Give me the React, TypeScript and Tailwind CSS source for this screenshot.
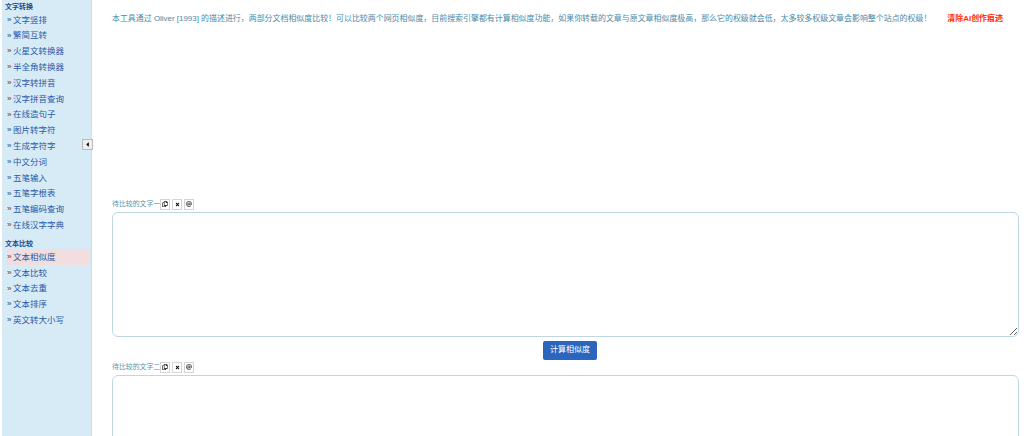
import { FaRegCopy, FaTimes, FaAt, FaCaretLeft } from 'react-icons/fa';

const group1 = [
  '文字竖排',
  '繁简互转',
  '火星文转换器',
  '半全角转换器',
  '汉字转拼音',
  '汉字拼音查询',
  '在线造句子',
  '图片转字符',
  '生成字符字',
  '中文分词',
  '五笔输入',
  '五笔字根表',
  '五笔编码查询',
  '在线汉字字典',
];

const group2 = ['文本相似度', '文本比较', '文本去重', '文本排序', '英文转大小写'];

const fontFamily = "font-['Liberation_Sans','Noto_Sans_CJK_SC',sans-serif]";

function NavItem({ label, active }: { label: string; active?: boolean }) {
  return (
    <li className={`ml-[5px] flex h-[15.8px] w-[83px] items-center text-[8.5px] leading-none text-[#2a5aa8] ${active ? 'bg-[#f2dede]' : ''}`}>
      <span className="w-[6px] text-[8px] text-[#444444]">»</span>
      <span>{label}</span>
    </li>
  );
}

function ToolButtons() {
  return (
    <div className="flex items-center gap-[2px]">
      <button className="flex h-[11px] w-[10px] items-center justify-center border border-[#d4d4d4] bg-white text-[6px] text-black">
        <FaRegCopy />
      </button>
      <button className="flex h-[11px] w-[10px] items-center justify-center border border-[#d4d4d4] bg-white text-[5px] text-black">
        <FaTimes />
      </button>
      <button className="flex h-[11px] w-[10px] items-center justify-center border border-[#d4d4d4] bg-white text-[6px] text-[#555555]">
        <FaAt />
      </button>
    </div>
  );
}

function FieldLabel({ text }: { text: string }) {
  return (
    <div className="flex h-[11px] items-center">
      <span className="text-[6.9px] leading-none text-[#5b93ad]">{text}</span>
      <ToolButtons />
    </div>
  );
}

export default function App() {
  return (
    <div className={`relative flex h-[436px] w-[1024px] overflow-hidden bg-white ${fontFamily}`}>
      <aside className="ml-[2px] h-full w-[90px] shrink-0 border-r border-[#c5e0ec] bg-[#d6ebf5]">
        <h3 className="mt-[3px] h-[8px] pl-[3px] text-[7px] font-bold leading-[8px] text-[#24488c]">文字转换</h3>
        <ul className="mt-[1px]">
          {group1.map((label) => (
            <NavItem key={label} label={label} />
          ))}
        </ul>
        <h3 className="mt-[7px] h-[8px] pl-[3px] text-[7px] font-bold leading-[8px] text-[#24488c]">文本比较</h3>
        <ul className="mt-[1px]">
          {group2.map((label, i) => (
            <NavItem key={label} label={label} active={i === 0} />
          ))}
        </ul>
      </aside>
      <button className="absolute left-[82px] top-[139px] flex h-[11px] w-[11px] items-center justify-center border border-[#bbbbbb] bg-[#eeeeee] text-[7px] text-black">
        <FaCaretLeft />
      </button>
      <main className="flex min-w-0 flex-1 flex-col pl-[20px] pr-[5px]">
        <div className="mt-[15px] flex h-[10px] items-center whitespace-nowrap text-[7.95px] leading-none text-[#4a8aa8]">
          <span>本工具通过 Oliver [1993] 的描述进行，两部分文档相似度比较！可以比较两个网页相似度，目前搜索引擎都有计算相似度功能，如果你转载的文章与原文章相似度极高，那么它的权级就会低，太多较多权级文章会影响整个站点的权级！</span>
          <span className="ml-[16px] font-bold text-[#ff3300]">清除AI创作痕迹</span>
        </div>
        <div className="mt-[176px]">
          <FieldLabel text="待比较的文字一" />
        </div>
        <textarea className="mt-[2px] h-[125px] w-full shrink-0 rounded-[6px] border border-[#bfd8df] bg-white" />
        <div className="mt-[4px] flex justify-center pl-[9px]">
          <button className="h-[19px] w-[54px] rounded-[2px] bg-[#2b65bd] text-[8px] leading-none text-white">计算相似度</button>
        </div>
        <div className="mt-[2px]">
          <FieldLabel text="待比较的文字二" />
        </div>
        <textarea className="mt-[2px] h-[125px] w-full shrink-0 rounded-[6px] border border-[#bfd8df] bg-white" />
      </main>
    </div>
  );
}
